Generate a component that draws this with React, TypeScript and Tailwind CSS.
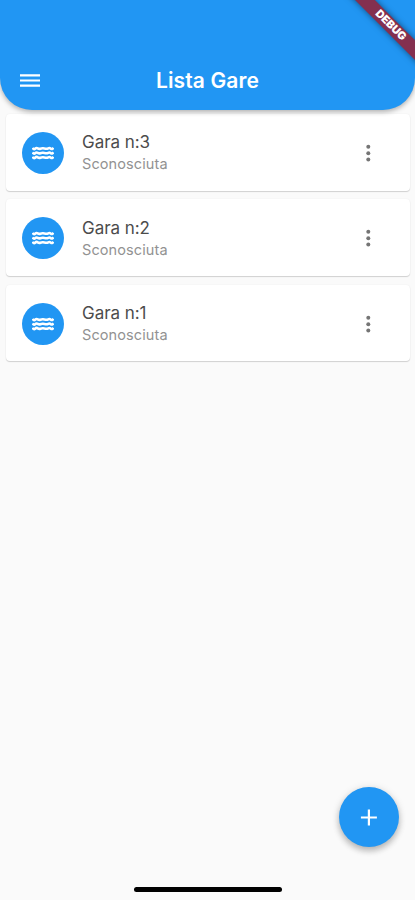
import React from "react";

const races = [3, 2, 1];

function Waves() {
  const wave = (y: number) =>
    `M0.5 ${y - 0.7}q1.37 2.2 2.75 .9t2.75 -.4t2.75 .4t2.75 -.4t2.75 .4t2.75 -.4t2.75 .4t2.75 -.9`;
  return (
    <svg width="22" height="16" viewBox="0 0 23 16" fill="none" stroke="white" strokeWidth="2.7" strokeLinejoin="round">
      <path d={wave(3.3)} />
      <path d={wave(8)} />
      <path d={wave(12.7)} />
    </svg>
  );
}

function RaceCard({ number }: { number: number }) {
  return (
    <li className="flex h-[76.5px] items-center rounded-[4px] bg-white pl-4 pt-px shadow-[0_1px_1px_rgba(0,0,0,0.16),0_0_2px_rgba(0,0,0,0.05)]">
      <div className="flex size-[42px] shrink-0 items-center justify-center rounded-full bg-[#2196f3]">
        <Waves />
      </div>
      <div className="ml-[18px] flex-1 pt-px">
        <p className="text-[17px] leading-[22px] tracking-[-0.05px] text-[#4c4c4c]">Gara n:{number}</p>
        <p className="text-[14.5px] leading-[22px] tracking-[0.1px] text-[#929292]">Sconosciuta</p>
      </div>
      <button className="mr-[30px] flex size-6 items-center justify-center" aria-label="Menu">
        <svg width="24" height="24" viewBox="0 0 24 24" fill="#757575">
          <circle cx="12.3" cy="5.8" r="2" />
          <circle cx="12.3" cy="12.2" r="2" />
          <circle cx="12.3" cy="18.6" r="2" />
        </svg>
      </button>
    </li>
  );
}

export default function App() {
  return (
    <div className="relative flex h-[900px] w-[415px] flex-col overflow-hidden bg-[#fafafa] font-['Inter',sans-serif]">
      <header className="relative z-10 flex h-[110px] shrink-0 items-end rounded-b-[32px] bg-[#2196f3] px-[18px] pb-[17px] text-white shadow-[0_2px_5px_rgba(0,0,0,0.3)]">
        <button className="flex size-6 items-center justify-center" aria-label="Apri menu">
          <svg width="24" height="24" viewBox="0 0 24 24" fill="white">
            <path d="M2 5.2h20v2.2H2zM2 10.4h20v2.2H2zM2 15.6h20v2.2H2z" />
          </svg>
        </button>
        <h1 className="flex-1 pr-6 text-center text-[21px] font-semibold leading-6 tracking-[0.12px]">Lista Gare</h1>
      </header>
      <ul className="mt-[4px] flex flex-col gap-[8.9px] pl-[6px] pr-[5px]">
        {races.map((n) => (
          <RaceCard key={n} number={n} />
        ))}
      </ul>
      <div className="absolute left-[330.5px] top-[18.5px] z-20 flex h-[13.5px] w-[120px] rotate-45 items-center justify-center bg-[#84304f] pr-[1px] text-[11px] font-black leading-none text-white shadow-[0_0_6px_rgba(0,0,0,0.5)]">
        DEBUG
      </div>
      <button className="absolute left-[338.5px] top-[787px] flex size-[60px] items-center justify-center rounded-full bg-[#2196f3] shadow-[0_4px_6px_rgba(0,0,0,0.22),0_1px_8px_rgba(0,0,0,0.12)]" aria-label="Aggiungi">
        <svg width="24" height="24" viewBox="0 0 24 24" stroke="white" strokeWidth="2.2">
          <path d="M11.9 4.5v16M3.9 12.5h16" />
        </svg>
      </button>
      <div className="mt-auto mb-[8px] h-[5px] w-[148px] self-center rounded-full bg-black" />
    </div>
  );
}
